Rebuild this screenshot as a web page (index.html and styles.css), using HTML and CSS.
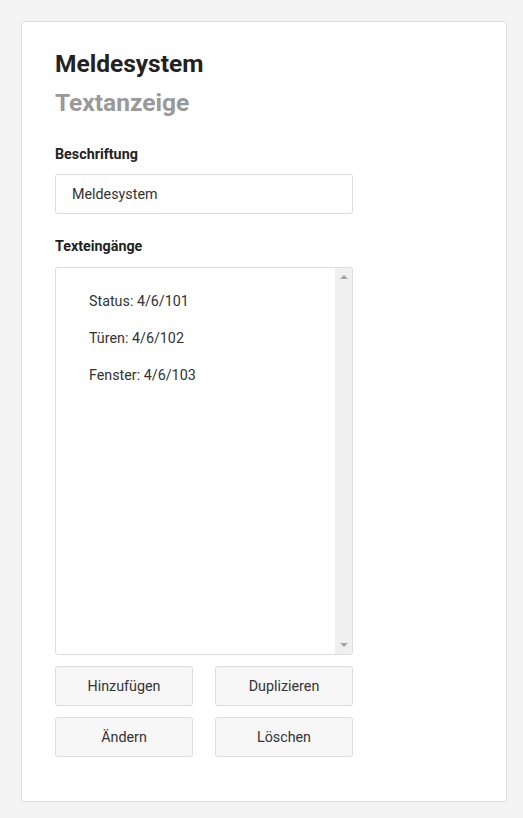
FILE: index.html
```html
<!DOCTYPE html>
<html lang="de">
<head>
    <meta charset="UTF-8">
    <meta name="viewport" content="width=device-width, initial-scale=1.0">
    <title>Meldesystem - Textanzeige</title>
    <link rel="stylesheet" href="styles.css">
</head>
<body>

    <div class="panel">
        <!-- Kopf -->
        <h1 class="title">Meldesystem</h1>
        <h2 class="subtitle">Textanzeige</h2>

        <!-- Beschriftung -->
        <label class="field-label" for="caption">Beschriftung</label>
        <input type="text" id="caption" class="text-input" value="Meldesystem">

        <!-- Texteingänge -->
        <div class="field-label list-label">Texteingänge</div>
        <div class="list-box">
            <ul class="entry-list">
                <li>Status: 4/6/101</li>
                <li>Türen: 4/6/102</li>
                <li>Fenster: 4/6/103</li>
            </ul>
            <div class="scroll-track">
                <span class="arrow arrow-up"></span>
                <span class="arrow arrow-down"></span>
            </div>
        </div>

        <div class="button-grid">
            <button class="btn">Hinzufügen</button>
            <button class="btn">Duplizieren</button>
            <button class="btn">Ändern</button>
            <button class="btn">Löschen</button>
        </div>
    </div>

</body>
</html>
```

FILE: styles.css
```css
body {
    margin: 0;
    padding: 21px 16px 17px 21px;
    background-color: #f4f4f4;
    font-family: Roboto, "Liberation Sans", sans-serif;
    color: #333;
}
.panel {
    width: 418px;
    padding: 28px 33px 44px 33px;
    background-color: #fff;
    border: 1px solid #dcdcdc;
    border-radius: 3px;
}
.title {
    margin: 0;
    font-size: 24.5px;
    line-height: 28px;
    font-weight: 700;
    color: #222;
}
.subtitle {
    margin: 11px 0 0 0;
    font-size: 24.5px;
    line-height: 28px;
    font-weight: 700;
    color: #999;
}
.field-label {
    display: block;
    margin: 27px 0 10px 0;
    font-size: 14.3px;
    line-height: 20px;
    font-weight: 700;
    color: #222;
}
.list-label {
    margin: 22px 0 11px 0;
}
.text-input {
    display: block;
    box-sizing: border-box;
    width: 298px;
    height: 40px;
    margin: 0;
    padding: 0 16px;
    font-family: inherit;
    font-size: 14.3px;
    color: #333;
    border: 1px solid #dcdcdc;
    border-radius: 3px;
    outline: none;
}
.list-box {
    display: flex;
    box-sizing: border-box;
    width: 298px;
    height: 388px;
    border: 1px solid #dcdcdc;
    border-radius: 3px;
    overflow: hidden;
}
.entry-list {
    flex: 1;
    margin: 0;
    padding: 23px 0 0 33px;
    list-style: none;
    font-size: 14.3px;
}
.entry-list li {
    line-height: 20px;
    margin-bottom: 17px;
}
.scroll-track {
    position: relative;
    width: 17px;
    background-color: #f0f0f0;
}
.arrow {
    position: absolute;
    left: 5px;
    width: 0;
    height: 0;
    border-left: 4px solid transparent;
    border-right: 4px solid transparent;
}
.arrow-up {
    top: 7px;
    border-bottom: 4px solid #a3a3a3;
}
.arrow-down {
    bottom: 7px;
    border-top: 4px solid #a3a3a3;
}
.button-grid {
    display: grid;
    grid-template-columns: 138px 138px;
    column-gap: 22px;
    row-gap: 11px;
    margin-top: 11px;
}
.btn {
    height: 40px;
    font-family: inherit;
    font-size: 14.3px;
    color: #333;
    background-color: #f7f7f7;
    border: 1px solid #dcdcdc;
    border-radius: 3px;
}
```
